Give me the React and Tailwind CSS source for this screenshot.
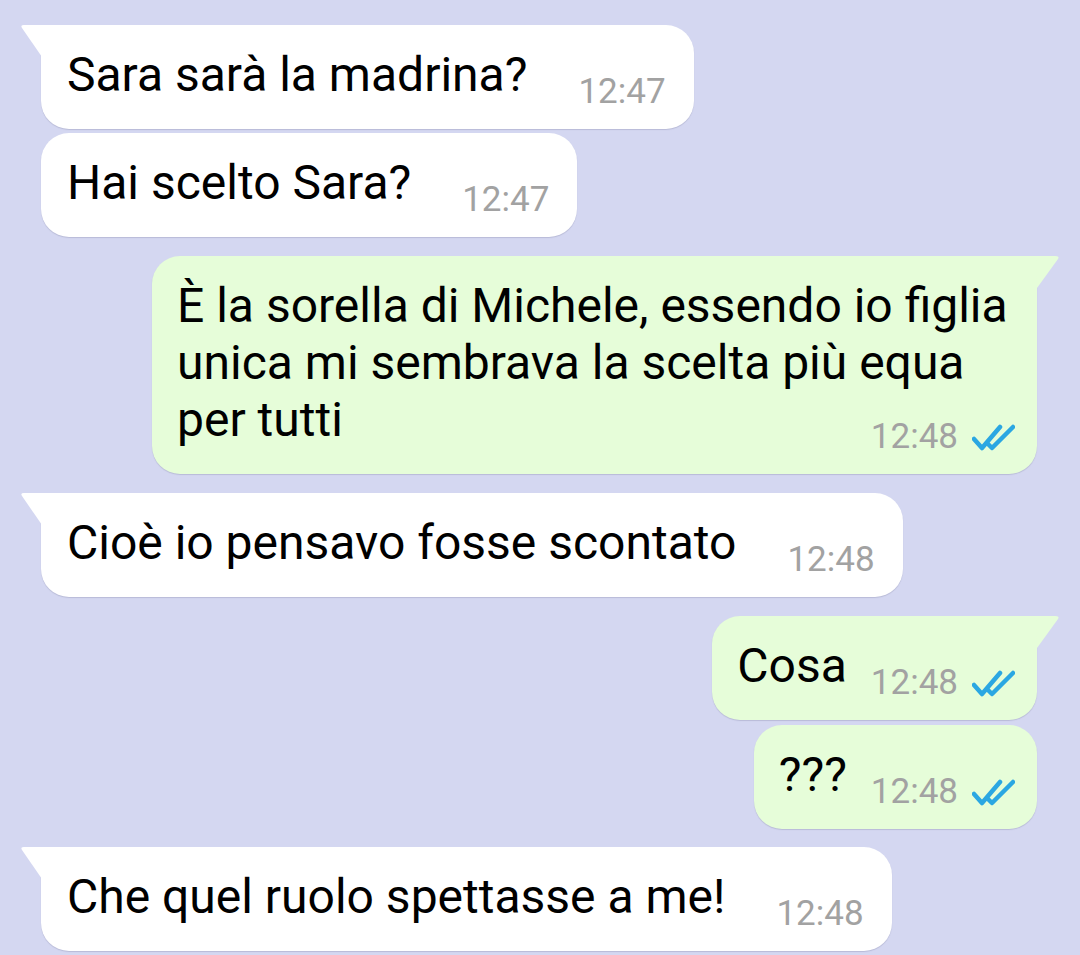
const messages = [
  { id: 1, out: false, tail: true, text: "Sara sarà la madrina?", time: "12:47", gap: "mt-0" },
  { id: 2, out: false, tail: false, text: "Hai scelto Sara?", time: "12:47", gap: "mt-[4px]" },
  {
    id: 3,
    out: true,
    tail: true,
    multi: true,
    text: "È la sorella di Michele, essendo io figlia unica mi sembrava la scelta più equa per tutti",
    time: "12:48",
    gap: "mt-[19px]",
  },
  { id: 4, out: false, tail: true, text: "Cioè io pensavo fosse scontato", time: "12:48", gap: "mt-[19px]" },
  { id: 5, out: true, tail: true, text: "Cosa", time: "12:48", gap: "mt-[19px]" },
  { id: 6, out: true, tail: false, text: "???", time: "12:48", gap: "mt-[5px]" },
  { id: 7, out: false, tail: true, text: "Che quel ruolo spettasse a me!", time: "12:48", gap: "mt-[18px]" },
];

function Ticks() {
  return (
    <svg width="43" height="27" viewBox="0 0 43 27" className="mb-[3px] ml-[14px]" fill="none">
      <path d="M2 15 L10 24 L28 3" stroke="#2ba7e2" strokeWidth="4.5" strokeLinecap="round" strokeLinejoin="round" />
      <path d="M16 20 L20 24 L41 3" stroke="#2ba7e2" strokeWidth="4.5" strokeLinecap="round" strokeLinejoin="round" />
    </svg>
  );
}

function Stamp({ time, out }) {
  return (
    <span className={`flex items-end shrink-0 ${out ? "ml-[24px]" : "ml-[51px]"}`}>
      <span className="text-[35px] leading-[35px] text-[#a2a2a2]">{time}</span>
      {out && <Ticks />}
    </span>
  );
}

function Bubble({ msg }) {
  const { out, tail, multi, text, time, gap } = msg;
  const bg = out ? "bg-[#e6fdd9]" : "bg-white";
  const corner = tail ? (out ? "rounded-tr-none" : "rounded-tl-none") : "";
  const pad = out ? "pl-[25px] pr-[22px]" : "pl-[26px] pr-[28px]";

  return (
    <div className={`flex ${out ? "justify-end" : "justify-start"} ${gap}`}>
      <div
        className={`relative ${bg} ${pad} rounded-[28px] ${corner} pt-[21px] pb-[20px] shadow-[0_1px_1px_rgba(60,60,100,0.18)] ${
          multi ? "w-[885px] flex flex-col" : "flex items-end"
        }`}
      >
        {tail && !out && (
          <svg width="22" height="33" viewBox="0 0 22 33" className="absolute left-[-21px] top-0">
            <path d="M22 0 H4 Q0 0 2 3 L22 32 Z" fill="#ffffff" />
          </svg>
        )}
        {tail && out && (
          <svg width="24" height="33" viewBox="0 0 24 33" className="absolute right-[-23px] top-0">
            <path d="M0 0 H19 Q24 0 22 3 L1 32 Z" fill="#e6fdd9" />
          </svg>
        )}
        <p className="text-[48px] leading-[57px] text-black mb-[6px]">{text}</p>
        {multi ? (
          <div className="flex justify-end -mt-[35px]">
            <Stamp time={time} out={out} />
          </div>
        ) : (
          <Stamp time={time} out={out} />
        )}
      </div>
    </div>
  );
}

export default function App() {
  return (
    <div className="min-h-screen w-[1080px] bg-[#d4d7f1] pt-[25px] pl-[41px] pr-[43px] font-['Roboto',sans-serif]">
      {messages.map((m) => (
        <Bubble key={m.id} msg={m} />
      ))}
    </div>
  );
}
